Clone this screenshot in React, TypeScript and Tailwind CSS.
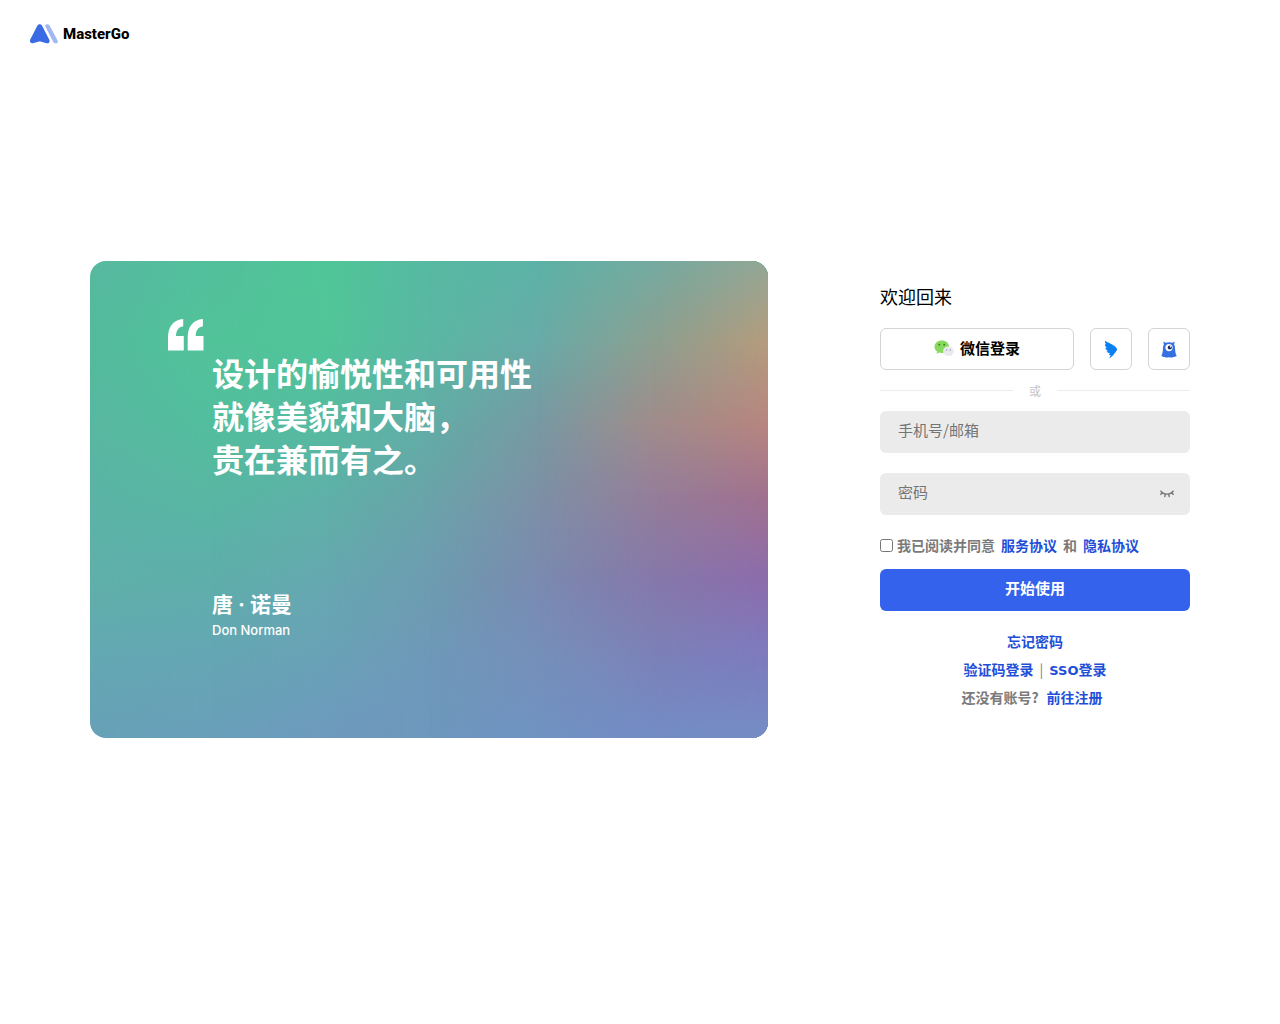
import { useState } from "react";

const MESH = [
  "bg-[linear-gradient(#57b9a0,#55bb9d_17%,#58b8a1_34%,#5bb3a5_50%,#5fb0aa_67%,#64a8b3_84%,#67a1b8)]",
  "bg-[linear-gradient(#53c09c,#51c39a_17%,#53be9d_34%,#58b6a3_50%,#5eaeab_67%,#65a6b4_84%,#6a9fba)] [mask-image:linear-gradient(90deg,transparent,black_18%)]",
  "bg-[linear-gradient(#50c698,#51c599_17%,#56baa1_34%,#5fb0a8_50%,#66a8b0_67%,#6aa1b8_84%,#6d9abc)] [mask-image:linear-gradient(90deg,transparent_18%,black_35%)]",
  "bg-[linear-gradient(#57b9a2,#5ab7a3_17%,#62ada7_34%,#6aa3aa_50%,#6d9cb0_67%,#6e98b8_84%,#6e97be)] [mask-image:linear-gradient(90deg,transparent_35%,black_50%)]",
  "bg-[linear-gradient(#5cb2a6,#68aba8_17%,#7799a2_34%,#7d90a6_50%,#7a8ab0_67%,#7590bb_84%,#7093c2)] [mask-image:linear-gradient(90deg,transparent_50%,black_66%)]",
  "bg-[linear-gradient(#74aaa0,#8c9f90_17%,#a08c8b_34%,#947d9a_50%,#8578aa_67%,#7b82b9_84%,#738cc4)] [mask-image:linear-gradient(90deg,transparent_66%,black_83%)]",
  "bg-[linear-gradient(#93a695,#b59b7c_17%,#b7857f_34%,#a0708f_50%,#8c6cad_67%,#7c7cbf_84%,#758dc5)] [mask-image:linear-gradient(90deg,transparent_83%,black)]",
];

function Logo() {
  return (
    <a href="#" className="flex items-center gap-[5px]" aria-label="MasterGo">
      <svg width="28" height="20" viewBox="0 0 28 20" aria-hidden="true">
        <path
          d="M15.2 2.2C15 .9 16.200 .2 17.300 .2c1 0 1.900.5 2.400 1.500l7.900 14.900c.7 1.300-.2 2.800-1.500 2.800-1.200 0-2.400-.5-3-1.600z"
          fill="#a3b7f3"
        />
        <path
          d="M7.300 1.800C8.300-.2 11.100-.2 12.100 1.800l7.200 13.900c1 2-.7 4.100-2.800 3.500l-5.300-1.500c-1-.3-2-.3-3 0l-5.300 1.500c-2.100.6-3.800-1.500-2.800-3.500z"
          fill="#3a6be4"
        />
      </svg>
      <span className="font-[Roboto,sans-serif] text-[15px] leading-5 font-extrabold text-black">MasterGo</span>
    </a>
  );
}

function QuoteMark() {
  return (
    <svg width="36" height="32" viewBox="0 0 36 32" fill="white" aria-hidden="true" className="shrink-0">
      <path d="M15.200 0v7.200C10.700 8 8.200 11 8 17h7.800v14.500H0V18.500C0 7.500 5.400.8 15.200 0z" />
      <path d="M34.900 0v7.200c-4.500.8-7 3.800-7.200 9.800h7.800v14.500H19.700V18.500C19.700 7.500 25.100.8 34.900 0z" />
    </svg>
  );
}

function WeChatIcon() {
  return (
    <svg width="20" height="17" viewBox="0 0 20 17" aria-hidden="true">
      <path
        d="M7.800.5C3.700.5.500 3.200.500 6.700c0 2 1 3.700 2.700 4.900L2.500 14l2.700-1.400c.8.2 1.700.4 2.600.4 4.100 0 7.300-2.800 7.300-6.300S11.900.5 7.800.5z"
        fill="#86d95c"
      />
      <ellipse cx="5.300" cy="4.800" rx=".9" ry="1" fill="#3d7a2a" />
      <ellipse cx="10.200" cy="4.800" rx=".9" ry="1" fill="#3d7a2a" />
      <path
        d="M14.400 6.600c-3 0-5.300 2-5.300 4.600s2.300 4.600 5.300 4.600c.7 0 1.300-.1 1.900-.3l1.900 1-.5-1.700c1.200-.8 2-2.100 2-3.600 0-2.600-2.400-4.600-5.300-4.600z"
        fill="#e8eaed"
      />
      <circle cx="12.700" cy="9.900" r=".7" fill="#8d9298" />
      <circle cx="16.300" cy="9.900" r=".7" fill="#8d9298" />
    </svg>
  );
}

function DingTalkIcon() {
  return (
    <svg width="14" height="19" viewBox="0 0 14 19" fill="#0a80f5" aria-hidden="true">
      <path d="M.9.400C2.500 1.800 4.700 2.600 6.800 3.700c2.300 1.200 4.800 2.700 6 4.800.4.700.3 1.400-.1 2L9.200 15.200 5.300 18.600l1.300-3.600H4.900l1-1.900c-1.500 0-2.800-.6-3.500-1.800l1.900-.1C2.700 10.400 1.600 9.300 1.200 7.700l1.700.4C1.700 6.900 1 5.500.9 3.900l1.200.6C1.200 3.200.800 1.800.9.400z" />
    </svg>
  );
}

function MonsterIcon() {
  return (
    <svg width="16" height="17" viewBox="0 0 16 17" aria-hidden="true">
      <path
        d="M2.600.2c.6.800 1.200 1.300 2 1.600 2-.8 4.800-.8 6.800 0 .8-.3 1.400-.8 2-1.600.2 1.300.1 2.400-.3 3.400.7 1.300.9 2.800 1 4.600.1 2.800.6 5 1.700 6.900-1.100.2-1.500 1-2.700 1-1 0-1.500.5-2.500.5s-1.600-.4-2.600-.4-1.600.4-2.600.4-1.500-.5-2.500-.5c-1.200 0-1.600-.8-2.700-1C1.300 13.200 1.800 11 1.900 8.200c.1-1.800.3-3.300 1-4.600C2.500 2.600 2.400 1.500 2.600.2z"
        fill="#3470e2"
      />
      <circle cx="8" cy="6.600" r="3.600" fill="white" />
      <circle cx="8.800" cy="6.500" r="2.100" fill="#1b2f5a" />
      <circle cx="9.600" cy="5.700" r=".8" fill="white" />
    </svg>
  );
}

function ClosedEye() {
  return (
    <svg width="14" height="8" viewBox="0 0 14 8" fill="none" stroke="#777" strokeWidth="1.400" aria-hidden="true">
      <path d="M.4.7C3.500 5.300 10.500 5.300 13.600.7M2.300 2.700.4 4.700M5.400 4.200 4.600 7M8.600 4.200l.8 2.800M11.700 2.700l1.900 2" />
    </svg>
  );
}

const field =
  "block h-[42px] w-full rounded-md bg-[#ebebeb] px-[18px] pb-1.5 text-[15px] text-gray-800 outline-none placeholder:text-[#757575]";
const iconButton = "flex h-[42px] w-[42px] items-center justify-center rounded-md border border-[#d4d4d4] bg-white";
const link = "font-bold text-[#1f4fd8]";

export default function App() {
  const [visible, setVisible] = useState(false);

  return (
    <div className="flex min-h-screen flex-col bg-white font-['Noto_Sans_CJK_SC',sans-serif]">
      <header className="flex h-[68px] items-center px-[30px]">
        <Logo />
      </header>

      <main className="flex flex-1 items-center gap-28 px-[90px] pb-[93px]">
        <section className="relative isolate aspect-[678/477] min-w-0 flex-1 overflow-hidden rounded-2xl">
          {MESH.map((layer) => (
            <div key={layer} className={`absolute inset-0 -z-10 ${layer}`} />
          ))}
          <div className="flex gap-2 pt-[58px] pl-[78px] text-white">
            <QuoteMark />
            <div className="pt-8">
              <blockquote className="text-[32px] leading-[43px] font-bold whitespace-nowrap">
                设计的愉悦性和可用性
                <br />
                就像美貌和大脑，
                <br />
                贵在兼而有之。
              </blockquote>
              <p className="mt-[110px] font-[Inter,'Noto_Sans_CJK_SC',sans-serif] text-[21px] leading-[30px] font-bold">
                唐 · 诺曼
              </p>
              <p className="font-[Inter,sans-serif] text-[13px] leading-5 font-medium">Don Norman</p>
            </div>
          </div>
        </section>

        <form className="w-[310px] shrink-0 pb-1" onSubmit={(e) => e.preventDefault()}>
          <h1 className="text-lg leading-6 text-black">欢迎回来</h1>

          <div className="mt-5 flex gap-4">
            <button
              type="button"
              className="flex h-[42px] flex-1 items-center justify-center gap-1.5 rounded-md border border-[#d4d4d4] bg-white pb-0.5 text-[15px] font-bold text-black"
            >
              <WeChatIcon />
              微信登录
            </button>
            <button type="button" aria-label="钉钉登录" className={iconButton}>
              <DingTalkIcon />
            </button>
            <button type="button" aria-label="账号登录" className={iconButton}>
              <MonsterIcon />
            </button>
          </div>

          <div className="flex h-[41px] items-center gap-4 text-xs text-[#c4c4c4]">
            <span className="h-px flex-1 bg-[#ececec]" />
            或
            <span className="h-px flex-1 bg-[#ececec]" />
          </div>

          <input type="text" aria-label="手机号/邮箱" placeholder="手机号/邮箱" className={field} />
          <div className="relative mt-5">
            <input type={visible ? "text" : "password"} aria-label="密码" placeholder="密码" className={field} />
            <button
              type="button"
              aria-label="显示密码"
              onClick={() => setVisible(!visible)}
              className="absolute inset-y-0 right-4 flex items-center"
            >
              <ClosedEye />
            </button>
          </div>

          <div className="mt-5 flex h-5 items-center text-sm font-bold text-[#7a7a7a]">
            <input id="agree" type="checkbox" className="mr-1 h-[13px] w-[13px]" />
            <label htmlFor="agree">我已阅读并同意</label>
            <a href="#" className={`mx-1.5 ${link}`}>服务协议</a>
            和
            <a href="#" className={`mx-1.5 ${link}`}>隐私协议</a>
          </div>

          <button type="submit" className="mt-3.5 h-[42px] w-full rounded-md bg-[#3562ec] pb-1 text-[15px] font-bold text-white">
            开始使用
          </button>

          <div className="mt-4 text-center text-sm leading-7 font-bold text-[#7a7a7a]">
            <p>
              <a href="#" className={link}>忘记密码</a>
            </p>
            <p className="flex h-7 justify-center gap-1.5">
              <a href="#" className={link}>验证码登录</a>
              <span className="font-normal">|</span>
              <a href="#" className={link}>
                <span className="font-['DejaVu_Sans',sans-serif] text-[13px]">SSO</span>登录
              </a>
            </p>
            <p className="flex h-7 justify-center gap-2 pr-1.5">
              <span>还没有账号?</span>
              <a href="#" className={link}>前往注册</a>
            </p>
          </div>
        </form>
      </main>
    </div>
  );
}
